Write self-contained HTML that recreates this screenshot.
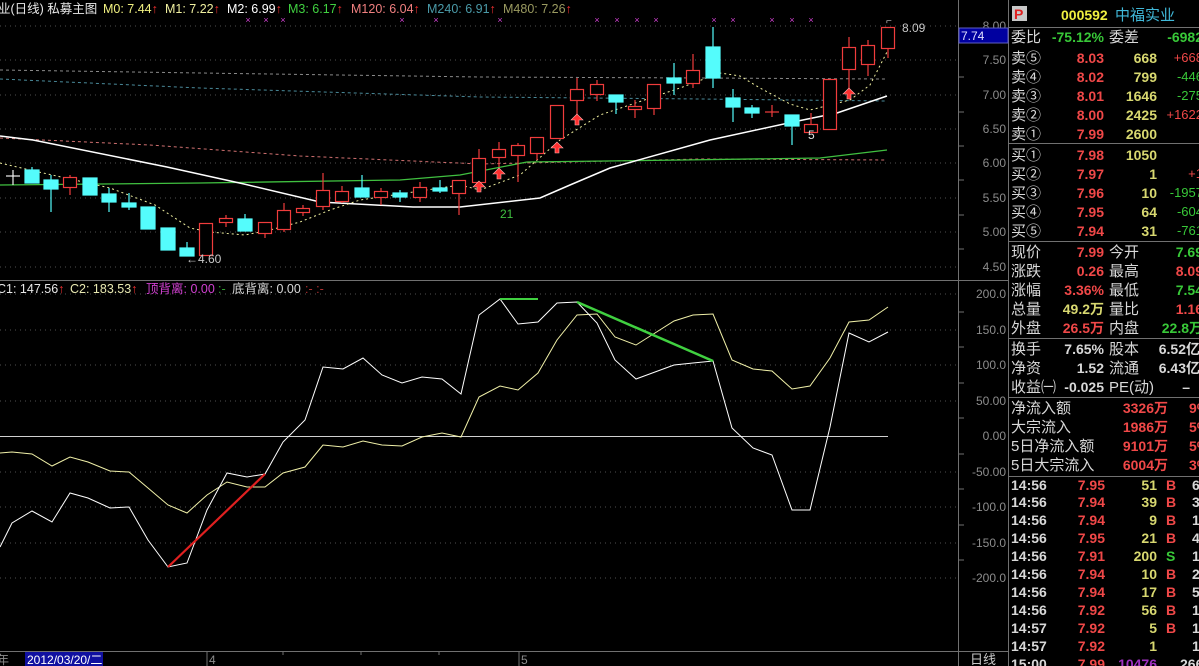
<!DOCTYPE html>
<html><head><meta charset="utf-8"><style>
html,body{margin:0;padding:0;background:#000;overflow:hidden}
svg{display:block}
text{font-family:"Liberation Sans","Noto Sans CJK SC",sans-serif}
.rp{font-size:14px;font-weight:bold}
.lb{fill:#d8d8d8;font-weight:normal}
.rd{fill:#f04848}.gr{fill:#38c838}.yl{fill:#d8d870}.wh{fill:#d8d8d8}
.ax{font-size:12px;fill:#8c8c8c}
</style></head><body>
<svg width="1199" height="666" viewBox="0 0 1199 666" xmlns="http://www.w3.org/2000/svg">
<rect width="1199" height="666" fill="#000"/>
<!-- grid lines top -->
<g stroke="#505050" stroke-dasharray="1 4">
<line x1="0" y1="26" x2="958" y2="26"/><line x1="0" y1="60" x2="958" y2="60"/><line x1="0" y1="95" x2="958" y2="95"/><line x1="0" y1="129" x2="958" y2="129"/><line x1="0" y1="163" x2="958" y2="163"/><line x1="0" y1="198" x2="958" y2="198"/><line x1="0" y1="232" x2="958" y2="232"/><line x1="0" y1="267" x2="958" y2="267"/>
<line x1="0" y1="294" x2="958" y2="294"/><line x1="0" y1="330" x2="958" y2="330"/><line x1="0" y1="365" x2="958" y2="365"/><line x1="0" y1="401" x2="958" y2="401"/><line x1="0" y1="472" x2="958" y2="472"/><line x1="0" y1="507" x2="958" y2="507"/><line x1="0" y1="543" x2="958" y2="543"/><line x1="0" y1="578" x2="958" y2="578"/>
</g>
<!-- frame -->
<g stroke="#707070" stroke-width="1">
<line x1="0" y1="280.5" x2="958" y2="280.5"/>
<line x1="958.5" y1="0" x2="958.5" y2="666"/>
<line x1="1008.5" y1="0" x2="1008.5" y2="666"/>
<line x1="0" y1="651.5" x2="1008" y2="651.5"/>
<line x1="958" y1="280.5" x2="1008" y2="280.5"/>
</g>
<!-- MA dashed lines -->
<polyline fill="none" stroke="#8a8a8a" stroke-dasharray="3 3" points="0,70 200,73 480,77 700,78 887,79"/>
<polyline fill="none" stroke="#4a8a9a" stroke-dasharray="3 3" points="0,79 200,88 480,97 700,99 887,101"/>
<polyline fill="none" stroke="#d07070" stroke-dasharray="3 3" points="0,138 150,145 300,156 480,164 700,159 887,160"/>
<polyline fill="none" stroke="#40c040" stroke-width="1.3" points="0,185 200,183 400,180 460,175 527,162 683,160 820,158 887,150"/>
<polyline fill="none" stroke="#ffffff" stroke-width="1.5" points="0,136 33,140 167,167 244,184 320,202 413,207 460,207 540,198 570,185 610,168 710,140 793,122 837,113 887,96"/>
<polyline fill="none" stroke="#f0f0a0" stroke-dasharray="2 3" points="0,163 30,170 110,188 155,205 190,228 210,232 245,235 270,230 300,222 330,210 360,200 400,194 460,185 480,190 520,175 560,140 600,115 680,88 720,73 740,76 760,88 790,104 810,110 850,100 870,85 888,50"/>
<!-- candles -->
<g stroke-width="1.2">
<g stroke="#eeeeee"><line x1="13" y1="170" x2="13" y2="185"/><line x1="6" y1="176" x2="20" y2="176"/></g>
<g id="cy" stroke="#54fcfc" fill="#54fcfc">
<line x1="32" y1="167" x2="32" y2="183"/><rect x="25" y="170" width="14" height="13"/>
<line x1="51" y1="175" x2="51" y2="212"/><rect x="44" y="180" width="14" height="9"/>
<rect x="83" y="178" width="14" height="17"/>
<line x1="109" y1="188" x2="109" y2="212"/><rect x="102" y="194" width="14" height="8"/>
<line x1="129" y1="193" x2="129" y2="210"/><rect x="122" y="203" width="14" height="4"/>
<rect x="141" y="207" width="14" height="22"/>
<rect x="161" y="228" width="14" height="22"/>
<line x1="187" y1="242" x2="187" y2="256"/><rect x="180" y="248" width="14" height="8"/>
<line x1="245" y1="214" x2="245" y2="231"/><rect x="238" y="219" width="14" height="12"/>
<line x1="362" y1="175" x2="362" y2="197"/><rect x="355" y="188" width="14" height="9"/>
<line x1="400" y1="190" x2="400" y2="202"/><rect x="393" y="193" width="14" height="4"/>
<line x1="440" y1="180" x2="440" y2="193"/><rect x="433" y="188" width="14" height="3"/>
<line x1="616" y1="95" x2="616" y2="114"/><rect x="609" y="95" width="14" height="7"/>
<line x1="674" y1="63" x2="674" y2="95"/><rect x="667" y="78" width="14" height="5"/>
<line x1="713" y1="27" x2="713" y2="88"/><rect x="706" y="47" width="14" height="31"/>
<line x1="733" y1="89" x2="733" y2="122"/><rect x="726" y="98" width="14" height="9"/>
<line x1="752" y1="105" x2="752" y2="118"/><rect x="745" y="108" width="14" height="5"/>
<line x1="792" y1="115" x2="792" y2="145"/><rect x="785" y="115" width="14" height="11"/>
</g>
<g stroke="#f03c3c" fill="#000">
<line x1="70" y1="175" x2="70" y2="195"/><rect x="63.5" y="177.5" width="13" height="10"/>
<rect x="199.5" y="223.5" width="13" height="32"/>
<line x1="226" y1="215" x2="226" y2="227"/><rect x="219.5" y="218.5" width="13" height="4"/>
<line x1="265" y1="222" x2="265" y2="238"/><rect x="258.5" y="222.5" width="13" height="11"/>
<line x1="284" y1="203" x2="284" y2="232"/><rect x="277.5" y="210.5" width="13" height="19"/>
<line x1="303" y1="205" x2="303" y2="216"/><rect x="296.5" y="208.5" width="13" height="4"/>
<line x1="323" y1="173" x2="323" y2="210"/><rect x="316.5" y="190.5" width="13" height="16"/>
<line x1="342" y1="186" x2="342" y2="203"/><rect x="335.5" y="191.5" width="13" height="10"/>
<line x1="381" y1="188" x2="381" y2="205"/><rect x="374.5" y="191.5" width="13" height="6"/>
<line x1="420" y1="182" x2="420" y2="202"/><rect x="413.5" y="187.5" width="13" height="10"/>
<line x1="459" y1="180" x2="459" y2="215"/><rect x="452.5" y="180.5" width="13" height="13"/>
<line x1="479" y1="149" x2="479" y2="182"/><rect x="472.5" y="158.5" width="13" height="24"/>
<line x1="499" y1="142" x2="499" y2="167"/><rect x="492.5" y="149.5" width="13" height="8"/>
<line x1="518" y1="143" x2="518" y2="182"/><rect x="511.5" y="145.5" width="13" height="10"/>
<line x1="537" y1="137" x2="537" y2="160"/><rect x="530.5" y="137.5" width="13" height="16"/>
<rect x="550.5" y="105.5" width="13" height="33"/>
<line x1="577" y1="78" x2="577" y2="122"/><rect x="570.5" y="89.5" width="13" height="11"/>
<line x1="597" y1="80" x2="597" y2="101"/><rect x="590.5" y="84.5" width="13" height="10"/>
<line x1="635" y1="100" x2="635" y2="118"/><rect x="628.5" y="106.5" width="13" height="3"/>
<line x1="654" y1="84" x2="654" y2="115"/><rect x="647.5" y="84.5" width="13" height="24"/>
<line x1="693" y1="54" x2="693" y2="88"/><rect x="686.5" y="70.5" width="13" height="13"/>
<line x1="772" y1="105" x2="772" y2="117"/><line x1="765" y1="112" x2="779" y2="112"/>
<line x1="811" y1="113" x2="811" y2="132"/><rect x="804.5" y="124.5" width="13" height="8"/>
<rect x="823.5" y="79.5" width="13" height="50"/>
<line x1="849" y1="37" x2="849" y2="95"/><rect x="842.5" y="47.5" width="13" height="22"/>
<line x1="868" y1="40" x2="868" y2="76"/><rect x="861.5" y="45.5" width="13" height="19"/>
<line x1="888" y1="27" x2="888" y2="58"/><rect x="881.5" y="27.5" width="13" height="21"/>
</g>
</g>
<!-- red arrows -->
<g fill="#ff3030" stroke="#ffb0b0" stroke-width="0.6">
<path d="M479,181 l-6,6 h4 v5 h4 v-5 h4 z"/>
<path d="M499,168 l-6,6 h4 v5 h4 v-5 h4 z"/>
<path d="M557,142 l-6,6 h4 v5 h4 v-5 h4 z"/>
<path d="M577,114 l-6,6 h4 v5 h4 v-5 h4 z"/>
<path d="M849,88 l-6,6 h4 v5 h4 v-5 h4 z"/>
</g>
<!-- magenta marks -->
<g fill="#d040d0" font-size="9" text-anchor="middle" style="font-family:'DejaVu Sans',sans-serif">
<text x="248" y="23">×</text><text x="266" y="23">×</text><text x="283" y="23">×</text><text x="402" y="23">×</text><text x="436" y="23">×</text><text x="500" y="23">×</text><text x="597" y="23">×</text><text x="617" y="23">×</text><text x="637" y="23">×</text><text x="656" y="23">×</text><text x="714" y="23">×</text><text x="733" y="23">×</text><text x="772" y="23">×</text><text x="792" y="23">×</text><text x="811" y="23">×</text>
</g>
<text x="500" y="218" font-size="12" fill="#40c040">21</text>
<text x="808" y="139" font-size="12" fill="#e0e0e0">5</text>
<text x="886" y="24" font-size="10" fill="#c0c0c0">⌐</text>
<text x="902" y="32" font-size="12" fill="#c8c8c8">8.09</text>
<text x="186" y="263" font-size="12" fill="#c8c8c8">←4.60</text>
<!-- header top -->
<text y="13" font-size="12.5">
<tspan x="-2" fill="#e8e8e8">业(日线) 私募主图</tspan>
<tspan x="103" fill="#f0f080">M0: 7.44</tspan><tspan fill="#f03030">↑</tspan>
<tspan x="165" fill="#f0f0a0">M1: 7.22</tspan><tspan fill="#f03030">↑</tspan>
<tspan x="227" fill="#ffffff">M2: 6.99</tspan><tspan fill="#f03030">↑</tspan>
<tspan x="288" fill="#40d040">M3: 6.17</tspan><tspan fill="#f03030">↑</tspan>
<tspan x="351" fill="#f08080">M120: 6.04</tspan><tspan fill="#f03030">↑</tspan>
<tspan x="427" fill="#4a9aa8">M240: 6.91</tspan><tspan fill="#f03030">↑</tspan>
<tspan x="503" fill="#9a9a60">M480: 7.26</tspan><tspan fill="#f03030">↑</tspan>
</text>
<!-- indicator header -->
<text y="293" font-size="12.5">
<tspan x="-3" fill="#e8e8e8">C1: 147.56</tspan><tspan fill="#f03030">↑</tspan>
<tspan x="70" fill="#e8e8b0">C2: 183.53</tspan><tspan fill="#f03030">↑</tspan>
<tspan x="146" fill="#d040d0">顶背离: 0.00</tspan><tspan x="218" fill="#30a030">:-</tspan>
<tspan x="232" fill="#d8d8d8">底背离: 0.00</tspan><tspan x="305" fill="#b03030">:- :-</tspan>
</text>
<!-- indicator -->
<line x1="0" y1="436.5" x2="888" y2="436.5" stroke="#d0d0d0"/>
<polyline fill="none" stroke="#f0f0a8" stroke-width="1" points="0,453 12,452 32,454 52,466 70,457 88,462 110,471 129,472 148,488 168,505 187,513 207,495 227,482 247,487 265,487 283,473 305,467 323,445 343,447 363,441 382,445 402,446 422,437 442,433 461,437 479,397 500,386 518,390 538,373 557,340 577,315 597,314 615,337 636,345 655,333 674,321 693,315 713,314 732,360 753,369 772,371 792,389 810,386 830,358 849,322 869,320 888,307"/>
<polyline fill="none" stroke="#ffffff" stroke-width="1" points="0,547 12,523 32,511 52,522 70,493 88,498 110,508 129,507 148,540 168,567 187,563 207,510 227,473 247,477 265,474 283,442 305,420 323,367 343,369 363,358 382,375 402,383 422,377 442,379 461,394 479,315 500,299 518,324 538,322 557,303 577,302 597,323 615,360 636,379 655,372 674,365 693,363 713,361 732,428 753,448 772,455 792,510 810,510 830,427 849,333 869,342 888,332"/>
<line x1="168" y1="567" x2="265" y2="474" stroke="#e02020" stroke-width="2.2"/>
<line x1="500" y1="299" x2="538" y2="299" stroke="#40d040" stroke-width="2"/>
<line x1="577" y1="302" x2="713" y2="361" stroke="#40d040" stroke-width="2.5"/>
<!-- axis labels -->
<g class="ax" text-anchor="end">
<text x="1006" y="30">8.00</text><text x="1006" y="64">7.50</text><text x="1006" y="99">7.00</text><text x="1006" y="133">6.50</text><text x="1006" y="167">6.00</text><text x="1006" y="202">5.50</text><text x="1006" y="236">5.00</text><text x="1006" y="271">4.50</text>
<text x="1006" y="298">200.0</text><text x="1006" y="334">150.0</text><text x="1006" y="369">100.0</text><text x="1006" y="405">50.00</text><text x="1006" y="440">0.00</text><text x="1006" y="476">-50.00</text><text x="1006" y="511">-100.0</text><text x="1006" y="547">-150.0</text><text x="1006" y="582">-200.0</text>
</g>
<g stroke="#707070">
<line x1="959" y1="43" x2="964" y2="43"/><line x1="959" y1="77" x2="964" y2="77"/><line x1="959" y1="112" x2="964" y2="112"/><line x1="959" y1="146" x2="964" y2="146"/><line x1="959" y1="180" x2="964" y2="180"/><line x1="959" y1="215" x2="964" y2="215"/><line x1="959" y1="249" x2="964" y2="249"/>
<line x1="959" y1="312" x2="964" y2="312"/><line x1="959" y1="347" x2="964" y2="347"/><line x1="959" y1="383" x2="964" y2="383"/><line x1="959" y1="418" x2="964" y2="418"/><line x1="959" y1="454" x2="964" y2="454"/><line x1="959" y1="489" x2="964" y2="489"/><line x1="959" y1="525" x2="964" y2="525"/><line x1="959" y1="560" x2="964" y2="560"/>
</g>
<rect x="959" y="28" width="49" height="15" fill="#0000a0" stroke="#6060c0"/>
<text x="961" y="40" font-size="12" fill="#e0e0ff">7.74</text>
<!-- bottom bar -->
<text x="-3" y="664" font-size="12" fill="#8c8c8c">年</text>
<rect x="25" y="652" width="78" height="14" fill="#1010a0"/>
<text x="27" y="664" font-size="12" fill="#ffffff">2012/03/20/二</text>
<line x1="207" y1="651" x2="207" y2="666" stroke="#707070"/><text x="209" y="664" font-size="12" fill="#8c8c8c">4</text>
<line x1="519" y1="651" x2="519" y2="666" stroke="#707070"/><text x="521" y="664" font-size="12" fill="#8c8c8c">5</text>
<line x1="283" y1="651" x2="283" y2="655" stroke="#707070"/><line x1="361" y1="651" x2="361" y2="655" stroke="#707070"/><line x1="439" y1="651" x2="439" y2="655" stroke="#707070"/>
<text x="970" y="664" font-size="13" fill="#c8c8c8">日线</text>
<!-- right panel -->
<g stroke="#707070">
<line x1="1009" y1="27.5" x2="1199" y2="27.5"/><line x1="1009" y1="143.5" x2="1199" y2="143.5"/><line x1="1009" y1="241.5" x2="1199" y2="241.5"/><line x1="1009" y1="338.5" x2="1199" y2="338.5"/><line x1="1009" y1="397.5" x2="1199" y2="397.5"/><line x1="1009" y1="476.5" x2="1199" y2="476.5"/>
</g>
<rect x="1012" y="6" width="15" height="15" fill="#c8c8c8"/>
<text x="1014" y="19" font-size="14" font-weight="bold" fill="#e02020">P</text>
<text x="1061" y="20" class="rp" fill="#f0f040">000592</text>
<text x="1115" y="20" font-size="15" fill="#40b8d8">中福实业</text>
<g class="rp">
<text x="1011" y="42" class="lb" font-size="15">委比</text><text x="1104" y="42" text-anchor="end" class="gr">-75.12%</text><text x="1109" y="42" class="lb" font-size="15">委差</text><text x="1203" y="42" text-anchor="end" class="gr">-6982</text>
</g>
<g class="rp" text-anchor="end">
<g text-anchor="start" class="lb" font-size="15">
<text x="1011" y="63">卖⑤</text><text x="1011" y="82">卖④</text><text x="1011" y="101">卖③</text><text x="1011" y="120">卖②</text><text x="1011" y="139">卖①</text>
<text x="1011" y="160">买①</text><text x="1011" y="179">买②</text><text x="1011" y="198">买③</text><text x="1011" y="217">买④</text><text x="1011" y="236">买⑤</text>
</g>
<g class="rd"><text x="1104" y="63">8.03</text><text x="1104" y="82">8.02</text><text x="1104" y="101">8.01</text><text x="1104" y="120">8.00</text><text x="1104" y="139">7.99</text><text x="1104" y="160">7.98</text><text x="1104" y="179">7.97</text><text x="1104" y="198">7.96</text><text x="1104" y="217">7.95</text><text x="1104" y="236">7.94</text></g>
<g class="yl"><text x="1157" y="63">668</text><text x="1157" y="82">799</text><text x="1157" y="101">1646</text><text x="1157" y="120">2425</text><text x="1157" y="139">2600</text><text x="1157" y="160">1050</text><text x="1157" y="179">1</text><text x="1157" y="198">10</text><text x="1157" y="217">64</text><text x="1157" y="236">31</text></g>
<g font-weight="normal" font-size="13"><text x="1203" y="62" class="rd">+668</text><text x="1203" y="81" class="gr">-446</text><text x="1203" y="100" class="gr">-275</text><text x="1203" y="119" class="rd">+1622</text><text x="1203" y="178" class="rd">+1</text><text x="1203" y="197" class="gr">-1957</text><text x="1203" y="216" class="gr">-604</text><text x="1203" y="235" class="gr">-761</text></g>
</g>
<g class="rp">
<g class="lb" font-size="15">
<text x="1011" y="257">现价</text><text x="1011" y="276">涨跌</text><text x="1011" y="295">涨幅</text><text x="1011" y="314">总量</text><text x="1011" y="333">外盘</text>
<text x="1109" y="257">今开</text><text x="1109" y="276">最高</text><text x="1109" y="295">最低</text><text x="1109" y="314">量比</text><text x="1109" y="333">内盘</text>
<text x="1011" y="354">换手</text><text x="1011" y="373">净资</text><text x="1011" y="392">收益㈠</text>
<text x="1109" y="354">股本</text><text x="1109" y="373">流通</text><text x="1109" y="392">PE(动)</text>
<text x="1011" y="413">净流入额</text><text x="1011" y="432">大宗流入</text><text x="1011" y="451">5日净流入额</text><text x="1011" y="470">5日大宗流入</text>
</g>
<g text-anchor="end">
<text x="1104" y="257" class="rd">7.99</text><text x="1104" y="276" class="rd">0.26</text><text x="1104" y="295" class="rd">3.36%</text><text x="1104" y="314" class="yl">49.2万</text><text x="1104" y="333" class="rd">26.5万</text>
<text x="1203" y="257" class="gr">7.69</text><text x="1203" y="276" class="rd">8.09</text><text x="1203" y="295" class="gr">7.54</text><text x="1203" y="314" class="rd">1.16</text><text x="1203" y="333" class="gr">22.8万</text>
<text x="1104" y="354" class="wh">7.65%</text><text x="1104" y="373" class="wh">1.52</text><text x="1104" y="392" class="wh">-0.025</text>
<text x="1200" y="354" class="wh">6.52亿</text><text x="1200" y="373" class="wh">6.43亿</text><text x="1190" y="392" class="wh">–</text>
<text x="1168" y="413" class="rd">3326万</text><text x="1168" y="432" class="rd">1986万</text><text x="1168" y="451" class="rd">9101万</text><text x="1168" y="470" class="rd">6004万</text>
</g>
<text x="1189" y="413" class="rd">9%</text><text x="1189" y="432" class="rd">5%</text><text x="1189" y="451" class="rd">5%</text><text x="1189" y="470" class="rd">3%</text>
</g>
<!-- ticks -->
<g class="rp">
<g class="wh"><text x="1011" y="490">14:56</text><text x="1011" y="507">14:56</text><text x="1011" y="525">14:56</text><text x="1011" y="543">14:56</text><text x="1011" y="561">14:56</text><text x="1011" y="579">14:56</text><text x="1011" y="597">14:56</text><text x="1011" y="615">14:56</text><text x="1011" y="633">14:57</text><text x="1011" y="651">14:57</text><text x="1011" y="669">15:00</text></g>
<g class="rd" text-anchor="end"><text x="1105" y="490">7.95</text><text x="1105" y="507">7.94</text><text x="1105" y="525">7.94</text><text x="1105" y="543">7.95</text><text x="1105" y="561">7.91</text><text x="1105" y="579">7.94</text><text x="1105" y="597">7.94</text><text x="1105" y="615">7.92</text><text x="1105" y="633">7.92</text><text x="1105" y="651">7.92</text><text x="1105" y="669">7.99</text></g>
<g class="yl" text-anchor="end"><text x="1157" y="490">51</text><text x="1157" y="507">39</text><text x="1157" y="525">9</text><text x="1157" y="543">21</text><text x="1157" y="561">200</text><text x="1157" y="579">10</text><text x="1157" y="597">17</text><text x="1157" y="615">56</text><text x="1157" y="633">5</text><text x="1157" y="651">1</text><text x="1157" y="669" fill="#a030c0">10476</text></g>
<g class="rd"><text x="1166" y="490">B</text><text x="1166" y="507">B</text><text x="1166" y="525">B</text><text x="1166" y="543">B</text><text x="1166" y="561" class="gr">S</text><text x="1166" y="579">B</text><text x="1166" y="597">B</text><text x="1166" y="615">B</text><text x="1166" y="633">B</text></g>
<g class="wh"><text x="1192" y="490">6</text><text x="1192" y="507">3</text><text x="1192" y="525">1</text><text x="1192" y="543">4</text><text x="1192" y="561">1</text><text x="1192" y="579">2</text><text x="1192" y="597">5</text><text x="1192" y="615">1</text><text x="1192" y="633">1</text><text x="1192" y="651">1</text><text x="1180" y="669">266</text></g>
</g>
</svg>
</body></html>
